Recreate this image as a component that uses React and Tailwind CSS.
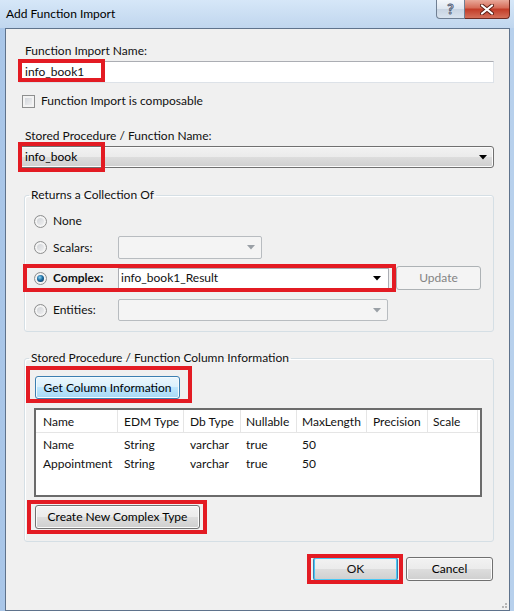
import React from 'react';

// Win7-ish dialog chrome pieces
const btnGray =
  'rounded-[3px] border border-[#707070] bg-[linear-gradient(#f2f2f2_0%,#ebebeb_50%,#dddddd_50%,#cfcfcf_100%)] shadow-[inset_0_0_0_1px_#fbfbfb] text-[#000]';
const btnBlue =
  'rounded-[3px] border border-[#3c7fb1] bg-[linear-gradient(#eaf6fd_0%,#d9f0fc_50%,#bee6fd_50%,#a7d9f5_100%)] shadow-[inset_0_0_0_1px_#f4fbfe] text-[#000]';

function RedBox({ className }) {
  return (
    <div className={`pointer-events-none absolute border-[4px] border-[#e31b23] ${className}`} />
  );
}

function Arrow({ disabled }) {
  return (
    <svg width="8" height="5" viewBox="0 0 8 5" className="shrink-0">
      <path d="M0 0 H8 L4 4.5 Z" fill={disabled ? '#9aa0a6' : '#000'} />
    </svg>
  );
}

function Radio({ checked }) {
  return (
    <span className="relative flex h-[13px] w-[13px] shrink-0 items-center justify-center rounded-full border border-[#8e8f8f] bg-[linear-gradient(135deg,#c9ccd1,#f7f7f7)] shadow-[inset_0_0_0_2px_#f4f4f4]">
      {checked && (
        <span className="h-[7px] w-[7px] rounded-full bg-[radial-gradient(circle_at_40%_35%,#8fd6f5_0%,#1d6ea3_45%,#0b2a45_100%)]" />
      )}
    </span>
  );
}

function DisabledSelect({ className }) {
  return (
    <div className={`flex items-center justify-end rounded-[2px] border border-[#b8bcc0] bg-[#f4f4f4] pr-[6px] ${className}`}>
      <Arrow disabled />
    </div>
  );
}

const cols = [
  { name: 'Name', w: 'w-[82px] pl-[7px]' },
  { name: 'EDM Type', w: 'w-[66px] pl-[6px]' },
  { name: 'Db Type', w: 'w-[57px] pl-[6px]' },
  { name: 'Nullable', w: 'w-[56px] pl-[5px]' },
  { name: 'MaxLength', w: 'w-[70px] pl-[5px]' },
  { name: 'Precision', w: 'w-[61px] pl-[6px]' },
  { name: 'Scale', w: 'w-[50px] pl-[5px]' },
];

const rows = [
  ['Name', 'String', 'varchar', 'true', '50', '', ''],
  ['Appointment', 'String', 'varchar', 'true', '50', '', ''],
];

export default function App() {
  return (
    <div className="flex h-[611px] w-[514px] flex-col overflow-hidden bg-[linear-gradient(90deg,#a9c6e8,#c4daf1_40%,#b7d0ec)] font-['Lato',sans-serif] text-[12px] leading-[16px] text-[#111]">
      {/* ── title bar ── */}
      <div className="relative flex h-[28px] shrink-0 items-center bg-[linear-gradient(#d6e7f8,#c0d6ee)] pl-[6px]">
        <span className="text-[12px] text-[#000]">Add Function Import</span>
        <div className="absolute right-[4px] top-0 flex">
          <div className="flex h-[19px] w-[29px] items-center justify-center rounded-bl-[4px] border border-t-0 border-[#6f7f93] bg-[linear-gradient(#f4f7fb_0%,#dde6f0_50%,#c8d4e2_50%,#d9e3ee_100%)]">
            <span className="text-[14px] font-bold leading-none text-white [-webkit-text-stroke:1px_#56637a]">?</span>
          </div>
          <div className="flex h-[19px] w-[45px] items-center justify-center rounded-br-[4px] border border-l-0 border-t-0 border-[#6e2a21] bg-[linear-gradient(#e9a99a_0%,#d56a56_45%,#c23b27_50%,#d4705a_100%)]">
            <svg width="14" height="11" viewBox="0 0 14 11">
              <path d="M2 1.5 L12 9.5 M12 1.5 L2 9.5" stroke="#5b1e14" strokeWidth="4" strokeLinecap="round" />
              <path d="M2 1.5 L12 9.5 M12 1.5 L2 9.5" stroke="#fff" strokeWidth="2.2" strokeLinecap="round" />
            </svg>
          </div>
        </div>
      </div>

      {/* ── client area ── */}
      <div className="relative ml-[5px] mr-[4px] flex flex-1 flex-col border border-[#5f738c] bg-[#f0f0f0] pl-[13px] pr-[15px]">
        <div className="mt-[14px] pl-[6px]">Function Import Name:</div>
        <div className="relative mt-[2px] flex h-[22px] items-center border border-[#dde2e8] border-t-[#abadb3] bg-white pl-[5px]">
          info_book1
          <RedBox className="-left-[2px] -top-[3px] h-[23px] w-[87px]" />
        </div>

        <div className="mt-[10px] flex h-[16px] items-center pl-[3px]">
          <span className="h-[13px] w-[13px] shrink-0 border border-[#8e8f8f] bg-[linear-gradient(135deg,#cbcfd5,#f6f6f6)] shadow-[inset_0_0_0_2px_#f3f3f3]" />
          <span className="ml-[6px]">Function Import is composable</span>
        </div>

        <div className="mt-[19px] pl-[6px]">Stored Procedure / Function Name:</div>
        <div className={`relative mt-[2px] flex h-[22px] items-center justify-between pl-[5px] pr-[6px] ${btnGray}`}>
          <span>info_book</span>
          <Arrow />
          <RedBox className="-left-[2px] -top-[5px] h-[30px] w-[87px]" />
        </div>

        {/* ── Returns a Collection Of ── */}
        <fieldset className="ml-[5px] mt-[19px] rounded-[3px] border border-[#d5dfe5] pb-[9px] shadow-[inset_1px_1px_0_#fff]">
          <legend className="ml-[4px] px-[2px] leading-[16px]">Returns a Collection Of</legend>
          <div className="mt-[8px] flex h-[20px] items-center pl-[9px]">
            <Radio />
            <span className="ml-[6px]">None</span>
          </div>
          <div className="mt-[4px] flex h-[25px] items-center pl-[9px]">
            <Radio />
            <span className="ml-[6px] w-[65px]">Scalars:</span>
            <DisabledSelect className="h-[23px] w-[144px]" />
          </div>
          <div className="relative mt-[6px] flex h-[24px] items-center pl-[9px]">
            <Radio checked />
            <span className="ml-[6px] w-[65px] font-bold">Complex:</span>
            <div className="flex h-[21px] w-[271px] items-center justify-between border border-[#abadb3] bg-white pl-[2px] pr-[7px]">
              <span>info_book1_Result</span>
              <Arrow />
            </div>
            <div className="ml-[7px] flex h-[24px] w-[85px] items-center justify-center rounded-[3px] border border-[#adb2b5] bg-[#f4f4f4] text-[#838383]">
              Update
            </div>
            <RedBox className="-left-[2px] -top-[2px] h-[28px] w-[373px]" />
          </div>
          <div className="mt-[8px] flex h-[24px] items-center pl-[9px]">
            <Radio />
            <span className="ml-[6px] w-[65px]">Entities:</span>
            <DisabledSelect className="h-[22px] w-[270px]" />
          </div>
        </fieldset>

        {/* ── Column information ── */}
        <fieldset className="ml-[5px] mt-[18px] rounded-[3px] border border-[#d5dfe5] pb-[12px] shadow-[inset_1px_1px_0_#fff]">
          <legend className="ml-[4px] px-[2px] leading-[16px]">Stored Procedure / Function Column Information</legend>
          <div className="relative ml-[10px] mt-[10px] w-[145px]">
            <div className={`flex h-[23px] items-center justify-center ${btnBlue}`}>Get Column Information</div>
            <RedBox className="-left-[9px] -top-[10px] h-[37px] w-[166px]" />
          </div>

          <div className="ml-[9px] mt-[9px] h-[89px] w-[448px] border-2 border-[#6b6b6b] bg-white">
            <div className="flex h-[23px] border-b border-[#e5e5e5]">
              {cols.map(c => (
                <div key={c.name} className={`flex items-center border-r border-[#e5e5e5] pt-[2px] ${c.w}`}>
                  {c.name}
                </div>
              ))}
            </div>
            <div className="mt-[2px]">
              {rows.map(r => (
                <div key={r[0]} className="flex h-[19px] items-center">
                  {r.map((v, i) => (
                    <div key={i} className={`${cols[i].w}`}>{v}</div>
                  ))}
                </div>
              ))}
            </div>
          </div>

          <div className="relative ml-[10px] mt-[8px] w-[165px]">
            <div className={`flex h-[24px] items-center justify-center ${btnGray}`}>Create New Complex Type</div>
            <RedBox className="-left-[8px] -top-[5px] h-[34px] w-[180px]" />
          </div>
        </fieldset>

        {/* ── OK / Cancel ── */}
        <div className="mr-[1px] mt-[15px] flex justify-end gap-[8px]">
          <div className="relative">
            <div className="flex h-[24px] w-[85px] items-center justify-center rounded-[3px] border border-[#3c7fb1] bg-[linear-gradient(#f2f2f2_0%,#ebebeb_50%,#dddddd_50%,#cfcfcf_100%)] shadow-[inset_0_0_0_1px_#48c8f5]">
              OK
            </div>
            <RedBox className="-left-[6px] -top-[3px] h-[30px] w-[96px]" />
          </div>
          <div className={`flex h-[24px] w-[87px] items-center justify-center ${btnGray}`}>Cancel</div>
        </div>

        <div className="absolute bottom-[2px] right-[2px] grid grid-cols-3 gap-[1px]">
          <span />
          <span />
          <span className="h-[2px] w-[2px] bg-[#b5b5b5]" />
          <span />
          <span className="h-[2px] w-[2px] bg-[#b5b5b5]" />
          <span className="h-[2px] w-[2px] bg-[#b5b5b5]" />
        </div>
      </div>
    </div>
  );
}
